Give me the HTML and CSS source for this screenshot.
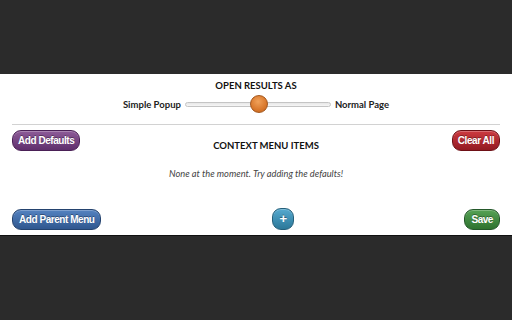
FILE: index.html
```html
<!DOCTYPE html>
<html lang="en">
<head>
    <meta charset="UTF-8">
    <title>Options</title>
    <link rel="stylesheet" href="styles.css">
</head>
<body>
    <div class="panel">
        <div class="section open-as">
            <div class="heading">OPEN RESULTS AS</div>
            <div class="slider-row">
                <span class="slider-label">Simple Popup</span>
                <div class="slider-track">
                    <div class="slider-thumb" style="left: 50%"></div>
                </div>
                <span class="slider-label">Normal Page</span>
            </div>
        </div>

        <div class="divider"></div>

        <div class="menu-head">
            <button class="btn purple">Add Defaults</button>
            <div class="heading menu-title">CONTEXT MENU ITEMS</div>
            <button class="btn red">Clear All</button>
        </div>

        <div class="empty-note">None at the moment. Try adding the defaults!</div>

        <div class="menu-foot">
            <button class="btn blue">Add Parent Menu</button>
            <button class="btn teal plus">+</button>
            <button class="btn green">Save</button>
        </div>
    </div>
</body>
</html>
```

FILE: styles.css
```css
body {
    margin: 0;
    padding: 74px 0 0;
    height: 320px;
    box-sizing: border-box;
    background-color: #2b2b2b;
    font-family: 'Lato', 'Open Sans', sans-serif;
    overflow: hidden;
}

.panel {
    background-color: #fff;
    border-bottom: 1px solid #111;
    padding: 6px 12px 6px;
    height: 162px;
    box-sizing: border-box;
}

.section {
    display: flex;
    flex-direction: column;
    align-items: center;
}

.heading {
    font-size: 9.5px;
    font-weight: bold;
    color: #111;
    line-height: 12px;
}

.slider-row {
    display: flex;
    align-items: center;
    gap: 4px;
    height: 18px;
    margin-top: 3px;
}

.slider-label {
    font-size: 9.5px;
    font-weight: bold;
    color: #222;
}

.slider-track {
    position: relative;
    width: 144px;
    height: 3px;
    background: linear-gradient(#e6e6e6, #f6f6f6);
    border: 1px solid #c4c4c4;
    border-radius: 3px;
}

.slider-thumb {
    position: absolute;
    top: -8px;
    width: 16px;
    height: 16px;
    margin-left: -8px;
    border-radius: 50%;
    background: radial-gradient(circle at 45% 35%, #f0a15a, #d9782c 60%, #c0621c);
    border: 1px solid #a3561c;
}

.divider {
    height: 1px;
    background-color: #d2d2d2;
    margin-top: 11px;
}

.menu-head {
    display: flex;
    justify-content: space-between;
    align-items: flex-start;
    margin-top: 5px;
}

.menu-title {
    padding-top: 10px;
}

.btn {
    font-family: 'Liberation Sans', Arial, sans-serif;
    font-size: 10px;
    letter-spacing: -0.45px;
    font-weight: bold;
    color: #fff;
    text-shadow: 0 -1px 0 rgba(0,0,0,0.35);
    height: 21px;
    padding: 0 5px;
    border-radius: 9px;
    border: 1px solid;
    cursor: pointer;
    box-shadow: inset 0 1px 0 rgba(255,255,255,0.25);
}

.purple {
    background: linear-gradient(#8d5b98, #5f2f6c);
    border-color: #4a2056;
}

.red {
    background: linear-gradient(#cd3a40, #921a22);
    border-color: #6e1016;
}

.blue {
    background: linear-gradient(#5482c0, #2f578f);
    border-color: #24436f;
    padding: 0 6px;
}

.green {
    background: linear-gradient(#55a254, #2e722f);
    border-color: #24582a;
    padding: 0 6px;
}

.teal {
    background: linear-gradient(#55a9cf, #2c7899);
    border-color: #245f7a;
}

.plus {
    width: 22px;
    height: 22px;
    padding: 0;
    font-size: 13px;
    line-height: 18px;
}

.empty-note {
    text-align: center;
    font-style: italic;
    font-size: 9.3px;
    color: #444;
    margin-top: 16px;
}

.menu-foot {
    display: flex;
    justify-content: space-between;
    align-items: center;
    margin-top: 29px;
}
```
